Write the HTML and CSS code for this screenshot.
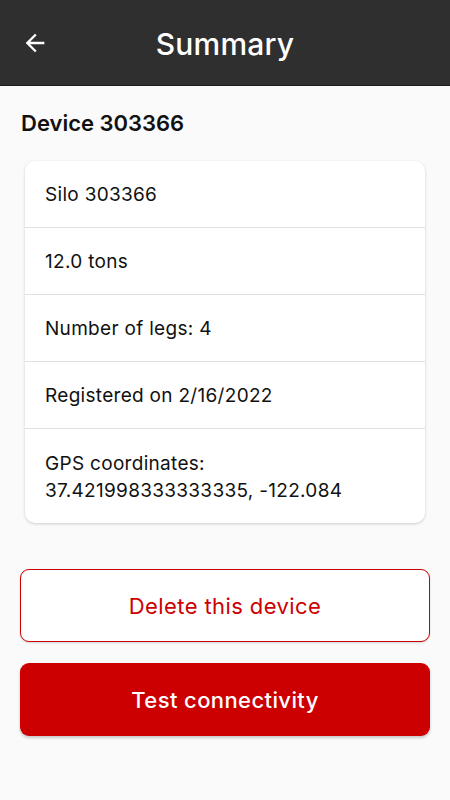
FILE: index.html
```html
<!DOCTYPE html>
<html>
<head>
<meta charset="utf-8">
<link rel="stylesheet" href="styles.css">
</head>
<body>
<header class="appbar">
  <svg class="back" viewBox="0 0 24 24" width="28" height="28"><path d="M20 11H7.83l5.59-5.59L12 4l-8 8 8 8 1.41-1.41L7.83 13H20v-2z" fill="#fff"/></svg>
  <h1 class="title">Summary</h1>
</header>
<main class="content">
  <h2 class="device">Device 303366</h2>
  <div class="card">
    <div class="row">Silo 303366</div>
    <div class="row">12.0 tons</div>
    <div class="row">Number of legs: 4</div>
    <div class="row">Registered on 2/16/2022</div>
    <div class="row row-tall">GPS coordinates:<br>37.421998333333335, -122.084</div>
  </div>
  <div class="actions">
    <button class="btn btn-outline">Delete this device</button>
    <button class="btn btn-fill">Test connectivity</button>
  </div>
</main>
</body>
</html>
```
FILE: styles.css
```css
html, body {
  margin: 0;
  padding: 0;
  background: #fafafa;
  font-family: Inter, "Noto Sans", sans-serif;
  color: #111;
}
.appbar {
  height: 86px;
  background: #2f2f2f;
  display: flex;
  align-items: center;
  justify-content: center;
  position: relative;
  border-bottom: 1px solid #1a1a1a;
  box-sizing: border-box;
}
.back {
  position: absolute;
  left: 21px;
  top: 29px;
}
.title {
  margin: 2px 0 0;
  color: #fff;
  font-size: 30px;
  font-weight: 500;
  letter-spacing: 0.2px;
}
.content {
  padding: 22px 20px 20px;
}
.device {
  margin: 0 0 23px 1px;
  font-size: 22px;
  font-weight: 600;
  line-height: 30px;
}
.card {
  margin: 0 5px;
  background: #fff;
  border-radius: 10px;
  box-shadow: 0 1px 3px rgba(0,0,0,0.18);
  overflow: hidden;
}
.row {
  height: 67px;
  box-sizing: border-box;
  padding: 1px 20px 0;
  display: flex;
  align-items: center;
  font-size: 19px;
  letter-spacing: 0.3px;
  border-bottom: 1px solid #e0e0e0;
}
.row-tall {
  height: 94px;
  display: block;
  padding-top: 21px;
  line-height: 27px;
  border-bottom: none;
}
.actions {
  margin-top: 46px;
  display: flex;
  flex-direction: column;
  gap: 21px;
}
.btn {
  height: 73px;
  border-radius: 9px;
  font-family: inherit;
  font-size: 22px;
  letter-spacing: 0.4px;
  cursor: pointer;
}
.btn-outline {
  background: #fff;
  color: #cc0000;
  border: 1px solid #cc0000;
  box-shadow: 0 1px 2px rgba(0,0,0,0.15);
}
.btn-fill {
  background: #cc0000;
  color: #fff;
  border: none;
  font-weight: 500;
  box-shadow: 0 2px 3px rgba(0,0,0,0.2);
}
```
